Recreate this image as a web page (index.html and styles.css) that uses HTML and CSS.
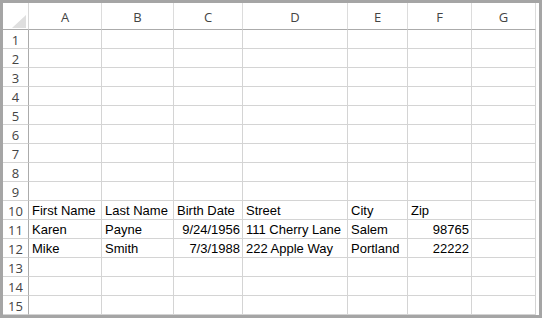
FILE: index.html
```html
<!DOCTYPE html>
<html lang="en">
<head>
    <meta charset="UTF-8">
    <title>Sheet1</title>
    <link rel="stylesheet" href="styles.css">
</head>
<body>
    <div class="frame">
        <div class="sheet">
            <div class="corner">
                <svg width="14" height="13" viewBox="0 0 14 13"><path d="M14 0 L14 13 L0 13 Z" fill="#dfdfdf"/></svg>
            </div>
            <div class="col-head">A</div>
            <div class="col-head">B</div>
            <div class="col-head">C</div>
            <div class="col-head">D</div>
            <div class="col-head">E</div>
            <div class="col-head">F</div>
            <div class="col-head">G</div>

            <div class="row-head">1</div><div class="cell"></div><div class="cell"></div><div class="cell"></div><div class="cell"></div><div class="cell"></div><div class="cell"></div><div class="cell"></div>
            <div class="row-head">2</div><div class="cell"></div><div class="cell"></div><div class="cell"></div><div class="cell"></div><div class="cell"></div><div class="cell"></div><div class="cell"></div>
            <div class="row-head">3</div><div class="cell"></div><div class="cell"></div><div class="cell"></div><div class="cell"></div><div class="cell"></div><div class="cell"></div><div class="cell"></div>
            <div class="row-head">4</div><div class="cell"></div><div class="cell"></div><div class="cell"></div><div class="cell"></div><div class="cell"></div><div class="cell"></div><div class="cell"></div>
            <div class="row-head">5</div><div class="cell"></div><div class="cell"></div><div class="cell"></div><div class="cell"></div><div class="cell"></div><div class="cell"></div><div class="cell"></div>
            <div class="row-head">6</div><div class="cell"></div><div class="cell"></div><div class="cell"></div><div class="cell"></div><div class="cell"></div><div class="cell"></div><div class="cell"></div>
            <div class="row-head">7</div><div class="cell"></div><div class="cell"></div><div class="cell"></div><div class="cell"></div><div class="cell"></div><div class="cell"></div><div class="cell"></div>
            <div class="row-head">8</div><div class="cell"></div><div class="cell"></div><div class="cell"></div><div class="cell"></div><div class="cell"></div><div class="cell"></div><div class="cell"></div>
            <div class="row-head">9</div><div class="cell"></div><div class="cell"></div><div class="cell"></div><div class="cell"></div><div class="cell"></div><div class="cell"></div><div class="cell"></div>

            <div class="row-head">10</div>
            <div class="cell">First Name</div>
            <div class="cell">Last Name</div>
            <div class="cell">Birth Date</div>
            <div class="cell">Street</div>
            <div class="cell">City</div>
            <div class="cell">Zip</div>
            <div class="cell"></div>

            <div class="row-head">11</div>
            <div class="cell">Karen</div>
            <div class="cell">Payne</div>
            <div class="cell num">9/24/1956</div>
            <div class="cell">111 Cherry Lane</div>
            <div class="cell">Salem</div>
            <div class="cell num">98765</div>
            <div class="cell"></div>

            <div class="row-head">12</div>
            <div class="cell">Mike</div>
            <div class="cell">Smith</div>
            <div class="cell num">7/3/1988</div>
            <div class="cell">222 Apple Way</div>
            <div class="cell">Portland</div>
            <div class="cell num">22222</div>
            <div class="cell"></div>

            <div class="row-head">13</div><div class="cell"></div><div class="cell"></div><div class="cell"></div><div class="cell"></div><div class="cell"></div><div class="cell"></div><div class="cell"></div>
            <div class="row-head">14</div><div class="cell"></div><div class="cell"></div><div class="cell"></div><div class="cell"></div><div class="cell"></div><div class="cell"></div><div class="cell"></div>
            <div class="row-head">15</div><div class="cell"></div><div class="cell"></div><div class="cell"></div><div class="cell"></div><div class="cell"></div><div class="cell"></div><div class="cell"></div>
        </div>
    </div>
</body>
</html>
```

FILE: styles.css
```css
* {
    margin: 0;
    padding: 0;
    box-sizing: border-box;
}

body {
    background: #ffffff;
    font-family: 'Liberation Sans', Arial, sans-serif;
}

.frame {
    width: 542px;
    height: 318px;
    border: 3px solid #a5a5a5;
    background: #ffffff;
    overflow: hidden;
}

.sheet {
    display: grid;
    grid-template-columns: 26px 73px 72px 69px 105px 60px 64px 64px;
    grid-template-rows: 27px;
    grid-auto-rows: 19px;
}

.corner {
    display: flex;
    align-items: flex-end;
    justify-content: flex-end;
    padding: 0 2px 1px 0;
    border-right: 1px solid #d8d8d8;
    border-bottom: 1px solid #ababab;
}

.col-head {
    display: flex;
    align-items: center;
    justify-content: center;
    padding-top: 2px;
    font-family: 'Open Sans', sans-serif;
    font-size: 13px;
    color: #444444;
    border-right: 1px solid #dcdcdc;
    border-bottom: 1px solid #ababab;
}

.row-head {
    display: flex;
    align-items: center;
    justify-content: center;
    padding-top: 1px;
    font-family: 'Open Sans', sans-serif;
    font-size: 13px;
    color: #444444;
    border-right: 1px solid #ababab;
    border-bottom: 1px solid #d4d4d4;
}

.cell {
    display: flex;
    align-items: flex-end;
    padding: 0 2px 1px 3px;
    font-size: 13px;
    color: #000000;
    white-space: nowrap;
    border-right: 1px solid #d4d4d4;
    border-bottom: 1px solid #d4d4d4;
}

.cell.num {
    justify-content: flex-end;
}
```
